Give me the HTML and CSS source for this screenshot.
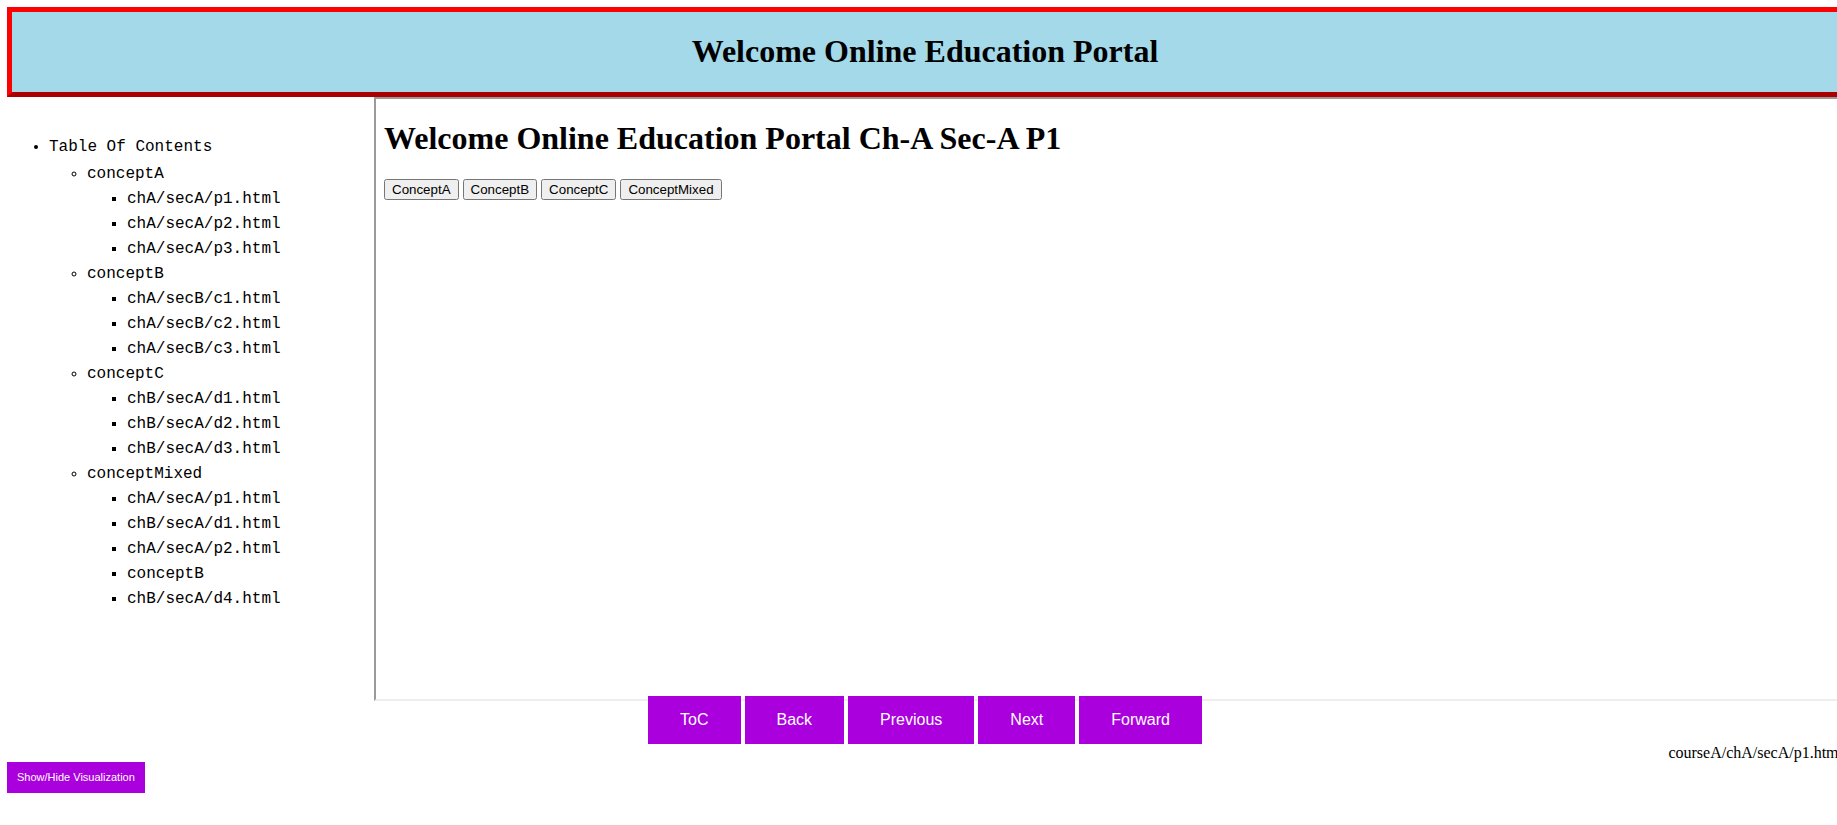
FILE: index.html
```html
<!DOCTYPE html>
<html>
<head>
<meta charset="utf-8">
<title>Welcome Online Education Portal</title>
<link rel="stylesheet" href="styles.css">
</head>
<body>
<div class="viewport">
<div class="page">
  <header class="banner">
    <h1 class="banner-title">Welcome Online Education Portal</h1>
  </header>
  <div class="main">
    <nav class="sidebar">
      <ul class="toc toc-l1">
        <li>Table Of Contents
          <ul class="toc toc-l2">
            <li>conceptA
              <ul class="toc toc-l3">
                <li>chA/secA/p1.html</li>
                <li>chA/secA/p2.html</li>
                <li>chA/secA/p3.html</li>
              </ul>
            </li>
            <li>conceptB
              <ul class="toc toc-l3">
                <li>chA/secB/c1.html</li>
                <li>chA/secB/c2.html</li>
                <li>chA/secB/c3.html</li>
              </ul>
            </li>
            <li>conceptC
              <ul class="toc toc-l3">
                <li>chB/secA/d1.html</li>
                <li>chB/secA/d2.html</li>
                <li>chB/secA/d3.html</li>
              </ul>
            </li>
            <li>conceptMixed
              <ul class="toc toc-l3">
                <li>chA/secA/p1.html</li>
                <li>chB/secA/d1.html</li>
                <li>chA/secA/p2.html</li>
                <li>conceptB</li>
                <li>chB/secA/d4.html</li>
              </ul>
            </li>
          </ul>
        </li>
      </ul>
    </nav>
    <section class="frame">
      <h1 class="frame-title">Welcome Online Education Portal Ch-A Sec-A P1</h1>
      <div class="concepts">
        <button class="concept-btn">ConceptA</button>
        <button class="concept-btn">ConceptB</button>
        <button class="concept-btn">ConceptC</button>
        <button class="concept-btn">ConceptMixed</button>
      </div>
    </section>
  </div>
  <div class="nav">
    <button class="nav-btn">ToC</button>
    <button class="nav-btn">Back</button>
    <button class="nav-btn">Previous</button>
    <button class="nav-btn">Next</button>
    <button class="nav-btn">Forward</button>
  </div>
  <div class="path">courseA/chA/secA/p1.html</div>
  <button class="viz-btn">Show/Hide Visualization</button>
</div>
</div>
</body>
</html>
```

FILE: styles.css
```css
html {
  overflow: hidden;
}

body {
  margin: 7px 0 0 7px;
  background: #ffffff;
  color: #000000;
  font-family: "Liberation Serif", "Times New Roman", serif;
  font-size: 16px;
}

.viewport {
  overflow: hidden;
}

.page {
  width: 1836px;
}

.banner {
  box-sizing: border-box;
  width: 1836px;
  border: 5px outset red;
  background: #a3d9e8;
  text-align: center;
}

.banner-title {
  margin: 21.44px 0;
  font-size: 32px;
  font-weight: bold;
  line-height: normal;
}

.main {
  display: flex;
  align-items: flex-start;
}

.sidebar {
  box-sizing: border-box;
  width: 367px;
  flex: none;
  padding-top: 22px;
  padding-left: 2px;
}

.toc {
  margin: 0;
  font-family: "Liberation Mono", "Courier New", monospace;
  font-size: 16px;
  line-height: 25px;
}

.toc-l1 {
  margin: 16px 0;
  padding-left: 40px;
  list-style: disc;
}

.toc-l2 {
  margin-top: 2px;
  padding-left: 38px;
  list-style: circle;
}

.toc-l3 {
  padding-left: 40px;
  list-style: square;
}

.frame {
  box-sizing: content-box;
  width: 1453px;
  height: 600px;
  flex: none;
  padding: 0 8px;
  border: 2px inset #eeeeee;
}

.frame-title {
  margin: 21.44px 0;
  font-size: 32px;
  font-weight: bold;
  line-height: normal;
}

.concept-btn {
  font-family: "Liberation Sans", Arial, sans-serif;
  font-size: 13.333px;
}

.nav {
  margin-top: -5px;
  text-align: center;
}

.nav-btn {
  display: inline-block;
  margin: 0;
  padding: 15px 32px;
  border: none;
  background: #aa00de;
  color: #ffffff;
  font-family: "Liberation Sans", Arial, sans-serif;
  font-size: 16px;
  line-height: normal;
  vertical-align: top;
}

.path {
  text-align: right;
  line-height: normal;
}

.viz-btn {
  display: block;
  margin: 0;
  padding: 9.5px 10px;
  border: none;
  background: #aa00de;
  color: #ffffff;
  font-family: "Liberation Sans", Arial, sans-serif;
  font-size: 11px;
  line-height: normal;
}
```
